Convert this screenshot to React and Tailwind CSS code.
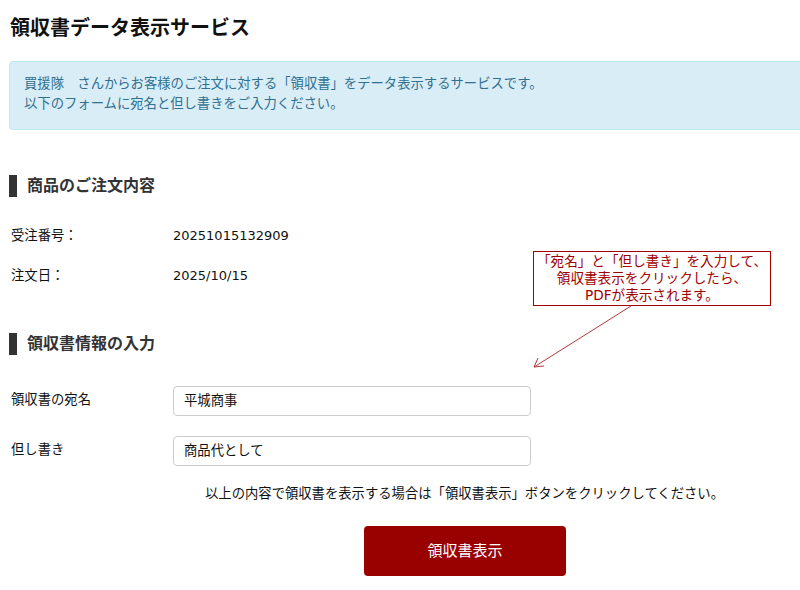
import React from "react";

const font = { fontFamily: '"DejaVu Sans", "Noto Sans CJK JP", sans-serif' };

function Heading({ children }) {
  return (
    <div className="flex items-center h-[22px] border-l-8 border-[#333] pl-[10px] text-[16px] font-bold text-[#333] leading-[22px]">
      {children}
    </div>
  );
}

export default function App() {
  return (
    <div className="relative w-[800px] h-[590px] overflow-hidden bg-white text-[13.33px] text-[#111]" style={font}>
      <div className="w-[920px] pl-[9px]">
        <h1 className="mt-[13px] pl-[1px] text-[20px] font-bold leading-[30px] text-[#111]">領収書データ表示サービス</h1>
        <div className="mt-[18px] h-[69px] rounded-[4px] border border-[#bce8f1] bg-[#d9edf7] pl-[14px] pt-[12px] leading-[20px] text-[#31708f]">
          <p>買援隊　さんからお客様のご注文に対する「領収書」をデータ表示するサービスです。</p>
          <p>以下のフォームに宛名と但し書きをご入力ください。</p>
        </div>

        <div className="mt-[45px]">
          <Heading>商品のご注文内容</Heading>
        </div>
        <div className="mt-[28px] flex h-[22px] items-center pl-[2px]">
          <span className="w-[162px]">受注番号：</span>
          <span className="text-[13px]">20251015132909</span>
        </div>
        <div className="mt-[18px] flex h-[22px] items-center pl-[2px]">
          <span className="w-[162px]">注文日：</span>
          <span className="text-[13px]">2025/10/15</span>
        </div>

        <div className="mt-[46px]">
          <Heading>領収書情報の入力</Heading>
        </div>
        <div className="mt-[31px] flex items-center pl-[2px]">
          <span className="w-[162px] -mt-[2px]">領収書の宛名</span>
          <div className="flex h-[30px] w-[358px] items-center rounded-[4px] border border-[#ccc] px-[10px]">平城商事</div>
        </div>
        <div className="mt-[20px] flex items-center pl-[2px]">
          <span className="w-[162px] -mt-[2px]">但し書き</span>
          <div className="flex h-[30px] w-[358px] items-center rounded-[4px] border border-[#ccc] px-[10px]">商品代として</div>
        </div>

        <p className="mt-[18px] text-center leading-[20px]">以上の内容で領収書を表示する場合は「領収書表示」ボタンをクリックしてください。</p>
        <div className="mt-[22px] flex justify-center">
          <button className="ml-[1px] h-[50px] w-[202px] rounded-[4px] bg-[#990000] text-[15px] text-white">領収書表示</button>
        </div>
      </div>

      <div className="absolute left-[533px] top-[251px] flex h-[55px] w-[238px] flex-col items-center justify-center border border-[#a00000] bg-white text-[13.6px] leading-[17px] text-[#a00000]">
        <span>「宛名」と「但し書き」を入力して、</span>
        <span>領収書表示をクリックしたら、</span>
        <span>PDFが表示されます。</span>
      </div>
      <svg className="absolute left-0 top-0 pointer-events-none" width="800" height="590">
        <g stroke="#b03a3a" strokeWidth="1" fill="none">
          <line x1="631" y1="306" x2="534" y2="367" />
          <line x1="534" y1="367" x2="538" y2="358" />
          <line x1="534" y1="367" x2="544" y2="366" />
        </g>
      </svg>
    </div>
  );
}
